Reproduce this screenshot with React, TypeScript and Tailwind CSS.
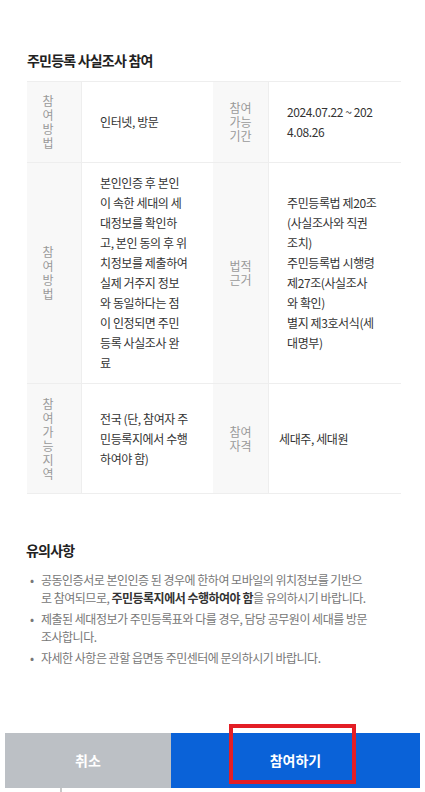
import React from "react";

const font = { fontFamily: '"Noto Sans CJK KR", "Noto Sans", sans-serif' };

type Row = {
  label1: string;
  value1: string[];
  label2: string[];
  value2: string[];
  h: string;
  v2pad?: string;
};

const rows: Row[] = [
  {
    label1: "참여방법",
    value1: ["인터넷, 방문"],
    label2: ["참여", "가능", "기간"],
    value2: ["2024.07.22 ~ 202", "4.08.26"],
    h: "h-[81px]",
  },
  {
    label1: "참여방법",
    value1: [
      "본인인증 후 본인",
      "이 속한 세대의 세",
      "대정보를 확인하",
      "고, 본인 동의 후 위",
      "치정보를 제출하여",
      "실제 거주지 정보",
      "와 동일하다는 점",
      "이 인정되면 주민",
      "등록 사실조사 완",
      "료",
    ],
    label2: ["법적", "근거"],
    value2: [
      "주민등록법 제20조",
      "(사실조사와 직권",
      "조치)",
      "주민등록법 시행령",
      "제27조(사실조사",
      "와 확인)",
      "별지 제3호서식(세",
      "대명부)",
    ],
    h: "h-[221px]",
  },
  {
    label1: "참여가능지역",
    value1: ["전국 (단, 참여자 주", "민등록지에서 수행", "하여야 함)"],
    label2: ["참여", "자격"],
    value2: ["세대주, 세대원"],
    h: "h-[110px]",
    v2pad: "pl-[10px]",
  },
];

function Lines({ lines }: { lines: string[] }) {
  return (
    <div>
      {lines.map((l, i) => (
        <div key={i} className="whitespace-nowrap">
          {l}
        </div>
      ))}
    </div>
  );
}

export default function App() {
  return (
    <div className="relative flex h-[792px] w-full flex-col overflow-hidden bg-white" style={font}>
      <div className="px-[27px] pt-[50px]">
        <h2 className="text-[14px] font-bold leading-[20px] tracking-[-0.8px] text-[#222]">
          주민등록 사실조사 참여
        </h2>

        <div className="mt-[11px] w-[374px] border-t border-[#eeeeee]">
          {rows.map((r, i) => (
            <div key={i} className={`flex border-b border-[#eeeeee] ${r.h}`}>
              <div className="flex w-[55px] shrink-0 items-center justify-center border-r border-[#eeeeee] bg-[#f8f8f8] pr-[12px] text-[12px] leading-[14px] text-[#9a9a9a]">
                <div className="flex flex-col items-center">
                  {r.label1.split("").map((c, j) => (
                    <span key={j}>{c}</span>
                  ))}
                </div>
              </div>
              <div className="flex w-[131px] shrink-0 items-center px-[18px] text-[12px] leading-[20px] tracking-[-0.4px] text-[#333]">
                <Lines lines={r.value1} />
              </div>
              <div className="flex w-[56px] shrink-0 items-center justify-center border-r border-[#eeeeee] bg-[#f8f8f8] text-center text-[12px] leading-[14px] text-[#9a9a9a]">
                <Lines lines={r.label2} />
              </div>
              <div
                className={`flex w-[132px] shrink-0 items-center ${r.v2pad ?? "pl-[18px]"} text-[12px] leading-[20px] tracking-[-0.4px] text-[#333]`}
              >
                <Lines lines={r.value2} />
              </div>
            </div>
          ))}
        </div>
      </div>

      <div className="px-[26px] pt-[46px]">
        <h3 className="text-[14px] font-bold leading-[20px] tracking-[-0.8px] text-[#222]">유의사항</h3>
        <ul className="mt-[11px] space-y-[3px] text-[12px] leading-[18px] tracking-[-0.5px] text-[#777]">
          <li className="flex">
            <span className="w-[15px] shrink-0 pl-[4px]">•</span>
            <div>
              <div className="whitespace-nowrap">공동인증서로 본인인증 된 경우에 한하여 모바일의 위치정보를 기반으</div>
              <div className="whitespace-nowrap">
                로 참여되므로, <b className="font-bold text-[#333]">주민등록지에서 수행하여야 함</b>을 유의하시기 바랍니다.
              </div>
            </div>
          </li>
          <li className="flex">
            <span className="w-[15px] shrink-0 pl-[4px]">•</span>
            <div>
              <div className="whitespace-nowrap">제출된 세대정보가 주민등록표와 다를 경우, 담당 공무원이 세대를 방문</div>
              <div className="whitespace-nowrap">조사합니다.</div>
            </div>
          </li>
          <li className="flex">
            <span className="w-[15px] shrink-0 pl-[4px]">•</span>
            <div className="whitespace-nowrap">자세한 사항은 관할 읍면동 주민센터에 문의하시기 바랍니다.</div>
          </li>
        </ul>
      </div>

      <div className="mt-auto mb-[4px] flex h-[55px] px-[5px]">
        <button className="flex w-[166px] items-center justify-center bg-[#bcc0c5] text-[14px] font-bold text-white">
          취소
        </button>
        <button className="flex w-[249px] items-center justify-center bg-[#0a62d8] text-[14px] font-bold text-white">
          참여하기
        </button>
      </div>
      <div className="absolute left-[60px] top-[788px] h-[4px] w-[2px] bg-[#c8c8c8]" />

      <div className="pointer-events-none absolute left-[229px] top-[724px] h-[60px] w-[127px] border-[4px] border-[#e31e25]" />
    </div>
  );
}
